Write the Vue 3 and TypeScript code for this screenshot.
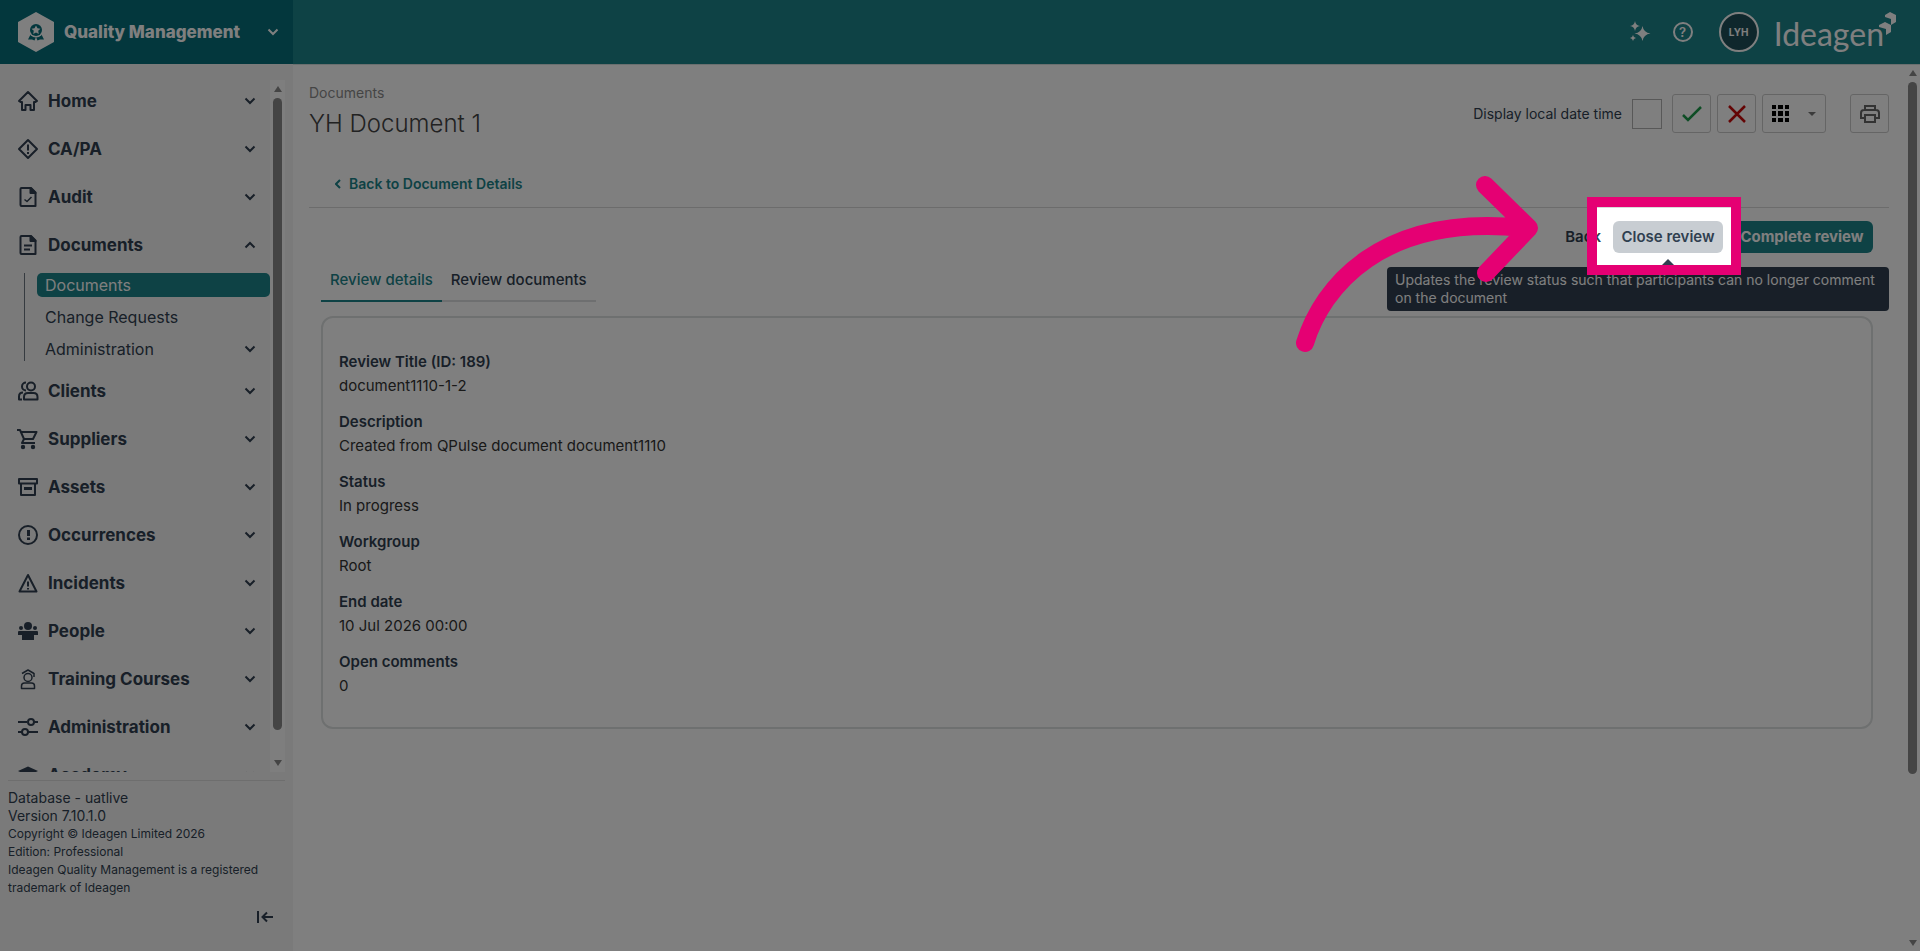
<script setup lang="ts">
import { ref } from 'vue'

interface NavChild {
  label: string
  active?: boolean
  expandable?: boolean
}

interface NavItem {
  label: string
  icon: string
  open?: boolean
  children?: NavChild[]
}

const navItems: NavItem[] = [
  { label: 'Home', icon: 'home' },
  { label: 'CA/PA', icon: 'diamond' },
  { label: 'Audit', icon: 'audit' },
  {
    label: 'Documents',
    icon: 'document',
    open: true,
    children: [
      { label: 'Documents', active: true },
      { label: 'Change Requests' },
      { label: 'Administration', expandable: true },
    ],
  },
  { label: 'Clients', icon: 'clients' },
  { label: 'Suppliers', icon: 'cart' },
  { label: 'Assets', icon: 'archive' },
  { label: 'Occurrences', icon: 'circle' },
  { label: 'Incidents', icon: 'triangle' },
  { label: 'People', icon: 'people' },
  { label: 'Training Courses', icon: 'trainee' },
  { label: 'Administration', icon: 'sliders' },
  { label: 'Academy', icon: 'cap' },
]

const details = [
  { term: 'Review Title (ID: 189)', value: 'document1110-1-2' },
  { term: 'Description', value: 'Created from QPulse document document1110' },
  { term: 'Status', value: 'In progress' },
  { term: 'Workgroup', value: 'Root' },
  { term: 'End date', value: '10 Jul 2026 00:00' },
  { term: 'Open comments', value: '0' },
]

const localTime = ref(false)
</script>

<template>
  <div class="page">
    <header class="topbar">
      <button class="brand" type="button">
        <svg class="brand-logo" viewBox="0 0 36 40" aria-hidden="true">
          <path d="M18 0 36 10v20L18 40 0 30V10z" fill="#fff" />
          <path d="M13 21.500 10 27.500h4l2.500 1 1.500-3.500 1.500 3.500 2.500-1h4l-3-6z" fill="#066e7a" />
          <circle cx="18" cy="18" r="7.500" fill="#fff" />
          <circle cx="18" cy="18" r="6" fill="#066e7a" />
          <path d="m18 13.500 1.500 2.800 3 .4-2.300 2.100.6 3.200-2.800-1.500-2.800 1.500.6-3.200-2.300-2.100 3-.4z" fill="#fff" />
        </svg>
        <span class="brand-name">Quality Management</span>
        <svg class="chevron" viewBox="0 0 12 12" aria-hidden="true"><path d="m1.500 3.500 4.500 4.500 4.500-4.500" /></svg>
      </button>
      <div class="top-actions">
        <button class="icon-button" type="button" aria-label="Assistant">
          <svg viewBox="0 0 22 22" width="22" height="22" fill="#fff" aria-hidden="true">
            <path d="M13.500 5q1 6.500 8 7.500-7 1-8 7.500-1-6.500-8-7.500 7-1 8-7.500z" />
            <path d="M6 0q.7 4.300 5 5-4.300.7-5 5-.7-4.300-5-5 4.300-.7 5-5z" />
            <path d="M4 14q.4 2.600 3 3-2.600.4-3 3-.4-2.600-3-3 2.600-.4 3-3z" />
          </svg>
        </button>
        <button class="icon-button help" type="button" aria-label="Help">?</button>
        <button class="avatar" type="button">LYH</button>
        <div class="company">
          <span>Ideagen</span>
          <svg viewBox="0 0 18 24" width="18" height="24" fill="#fff" aria-hidden="true">
            <path d="M7 3 12 0l6 3v7l-5 3V7L7 5z" />
            <path d="m1 13 6-3 6 3v7l-5 3v-6l-7-2z" />
          </svg>
        </div>
      </div>
    </header>

    <aside class="sidebar">
      <div class="nav-area">
        <nav class="nav">
          <div v-for="item in navItems" :key="item.label">
            <button class="nav-item" type="button" :aria-expanded="!!item.open">
              <svg class="nav-icon" viewBox="0 0 20 20" aria-hidden="true">
                <g v-if="item.icon === 'home'">
                  <path d="M1 10 10 1l9 9-1.500 1h-1.500v8h-3.500v-5h-5v5H4v-8H2.500z" />
                </g>
                <g v-else-if="item.icon === 'diamond'">
                  <path d="m10 1 9 9-9 9-9-9z" /><path d="M10 5.500v6M10 13v2" />
                </g>
                <g v-else-if="item.icon === 'audit'">
                  <path d="M3.500 1H13l4.500 4.500V19h-14q-1 0-1-1V2q0-1 1-1z" />
                  <path class="solid" d="M12.500 1v5h5z" /><path class="light" d="m6.500 12.500 2.500 2 4.500-4.500" />
                </g>
                <g v-else-if="item.icon === 'document'">
                  <path d="M3.500 1H13l4.500 4.500V19h-14q-1 0-1-1V2q0-1 1-1z" />
                  <path class="solid" d="M12.500 1v5h5z" /><path d="M6 10.500h8M6 14.500h6" />
                </g>
                <g v-else-if="item.icon === 'clients'">
                  <circle cx="13" cy="5.500" r="4" /><path d="M8 1.500a4 4 0 1 0 0 8M6 18v-2q0-4 4-4h5.500q4 0 4 4v2.500H6zM5 11.500q-4 0-4 4v3h3" />
                </g>
                <g v-else-if="item.icon === 'cart'">
                  <path d="M-1 1h3l4 9h9l3.500-7H3.500M6 10l-2 4h13" />
                  <circle class="solid" cx="5" cy="18" r="1.200" /><circle class="solid" cx="15" cy="18" r="1.200" />
                </g>
                <g v-else-if="item.icon === 'archive'">
                  <path d="M1 2h18v4.500H1zM3 6.500V18h14V6.500" /><path class="heavy" d="M6 11.500h8" />
                </g>
                <g v-else-if="item.icon === 'circle'">
                  <circle cx="10" cy="10" r="9" /><path class="heavy" d="M10.500 5v6M10.500 12.500v2.500" />
                </g>
                <g v-else-if="item.icon === 'triangle'">
                  <path d="m10 2 8.500 16.500h-17z" /><path d="M10 8.500v5M10 15v1.500" />
                </g>
                <g v-else-if="item.icon === 'people'" class="filled">
                  <circle cx="10" cy="5" r="4" /><circle cx="3" cy="7" r="2" /><circle cx="17" cy="7" r="2" />
                  <path d="M0 11q0-1 1-1h18q1 0 1 1v3h-4v5H4v-5H0z" />
                </g>
                <g v-else-if="item.icon === 'trainee'" class="light">
                  <circle cx="10" cy="8.500" r="4" /><path d="M4 4.500 10 1l6 3.500M16 4v4M3.500 19v-2q0-3 3-3h7q3 0 3 3v2.500h-13z" />
                </g>
                <g v-else-if="item.icon === 'sliders'">
                  <path d="M0 5h9M16 5h4M0 15h4M10 15h10" /><circle cx="13" cy="5" r="3" /><circle cx="7" cy="15" r="3" />
                </g>
                <g v-else class="filled">
                  <path d="m10 1.500 10 4.500-10 5L0 6z" /><path d="M4 10v5l6 3 6-3v-5l-6 3z" />
                </g>
              </svg>
              <span>{{ item.label }}</span>
              <svg class="chevron" :class="{ up: item.open }" viewBox="0 0 12 12" aria-hidden="true"><path d="m1.500 3.500 4.500 4.500 4.500-4.500" /></svg>
            </button>
            <div v-if="item.children" class="subnav">
              <a v-for="child in item.children" :key="child.label" href="#" :class="{ active: child.active }">
                {{ child.label }}
                <svg v-if="child.expandable" class="chevron" viewBox="0 0 12 12" aria-hidden="true"><path d="m1.500 3.500 4.500 4.500 4.500-4.500" /></svg>
              </a>
            </div>
          </div>
        </nav>
        <div class="scrollbar nav-scroll" aria-hidden="true">
          <i class="arrow-up"></i><i class="thumb"></i><i class="arrow-down"></i>
        </div>
      </div>
      <footer class="side-footer">
        <p class="large">Database - uatlive</p>
        <p class="large">Version 7.10.1.0</p>
        <p>Copyright © Ideagen Limited 2026</p>
        <p>Edition: Professional</p>
        <p>Ideagen Quality Management is a registered trademark of Ideagen</p>
        <button class="collapse" type="button" aria-label="Collapse menu">
          <svg viewBox="0 0 16 12" width="16" height="12" aria-hidden="true"><path d="M1 0v12M16 6H5.500M10 1.500 5.500 6l4.500 4.500" /></svg>
        </button>
      </footer>
    </aside>

    <div class="body">
      <main class="content">
        <div class="heading">
          <div>
            <div class="crumb">Documents</div>
            <h1>YH Document 1</h1>
          </div>
          <div class="toolbar">
            <label for="local-time">Display local date time</label>
            <input id="local-time" v-model="localTime" type="checkbox" />
            <button class="tool" type="button" aria-label="Accept">
              <svg viewBox="0 0 20 20" width="20" height="20" aria-hidden="true"><path d="m1 11 5 5L19 3" stroke="#1c9a4b" stroke-width="2.500" fill="none" /></svg>
            </button>
            <button class="tool" type="button" aria-label="Cancel">
              <svg viewBox="0 0 20 20" width="20" height="20" aria-hidden="true"><path d="m2 2 16 16M18 2 2 18" stroke="#c80a0a" stroke-width="2.500" fill="none" /></svg>
            </button>
            <button class="tool grid-tool" type="button" aria-label="View options">
              <svg viewBox="0 0 17 17" width="17" height="17" aria-hidden="true">
                <path d="M0 0h4v4H0zM6 0h5v4H6zM13 0h4v4h-4zM0 6h4v5H0zM6 6h5v5H6zM13 6h4v5h-4zM0 13h4v4H0zM6 13h5v4H6zM13 13h4v4h-4z" />
              </svg>
              <svg viewBox="0 0 8 4" width="8" height="4" aria-hidden="true"><path d="M0 0h8L4 4z" fill="#777" /></svg>
            </button>
            <button class="tool print" type="button" aria-label="Print">
              <svg viewBox="0 0 20 20" width="20" height="20" aria-hidden="true">
                <path d="M5 6V2h10v4M5 14H1V9q0-3 3-3h12q3 0 3 3v5h-4M5 11h10v7H5z" fill="none" stroke="#666" stroke-width="2" />
              </svg>
            </button>
          </div>
        </div>

        <div class="back-row">
          <a href="#">
            <svg viewBox="0 0 6 10" width="6" height="10" aria-hidden="true"><path d="M5 1 1 5l4 4" /></svg>
            Back to Document Details
          </a>
        </div>

        <div class="review">
          <div class="actions">
            <button class="btn plain" type="button">Back</button>
            <div class="highlighted">
              <button class="btn grey" type="button" aria-describedby="close-tip">Close review</button>
              <i class="tip-arrow"></i>
              <i class="spotlight"></i>
            </div>
            <button class="btn primary" type="button">Complete review</button>
            <div id="close-tip" class="tooltip" role="tooltip">
              Updates the review status such that participants can no longer comment on the document
            </div>
            <svg class="pointer" viewBox="0 0 255 185" width="255" height="185" aria-hidden="true">
              <path d="M15 173C32 118 90 43 234 58M195 15l44 43-43 45" />
            </svg>
          </div>

          <div class="tabs" role="tablist">
            <button class="selected" type="button" role="tab" aria-selected="true">Review details</button>
            <button type="button" role="tab" aria-selected="false">Review documents</button>
          </div>

          <dl class="card">
            <template v-for="row in details" :key="row.term">
              <dt>{{ row.term }}</dt>
              <dd>{{ row.value }}</dd>
            </template>
          </dl>
        </div>
      </main>
      <div class="scrollbar page-scroll" aria-hidden="true">
        <i class="arrow-up"></i><i class="thumb"></i><i class="arrow-down"></i>
      </div>
    </div>
  </div>
</template>

<style>
body {
  margin: 0;
}
</style>

<style scoped>
* {
  box-sizing: border-box;
}
.page {
  display: grid;
  grid-template: 64px minmax(0, 1fr) / 293px minmax(0, 1fr);
  height: 100vh;
  overflow: hidden;
  background: #fff;
  color: #303f50;
  font: 15px/20px Inter, "Liberation Sans", sans-serif;
}
button {
  padding: 0;
  border: 0;
  background: none;
  color: inherit;
  font: inherit;
  cursor: pointer;
}
a {
  color: inherit;
  text-decoration: none;
}
p, h1, dl, dd {
  margin: 0;
}
svg {
  display: block;
  flex: none;
}
.chevron {
  width: 12px;
  height: 12px;
  fill: none;
  stroke: currentColor;
  stroke-width: 2;
}
.chevron.up {
  transform: rotate(180deg);
}

/* Top bar */
.topbar {
  grid-column: 1 / 3;
  display: flex;
  justify-content: space-between;
  background: #1c848a;
}
.brand {
  display: flex;
  align-items: center;
  width: 293px;
  padding: 0 14px 0 18px;
  background: #066e7a;
  color: #fff;
}
.brand-logo {
  width: 36px;
  height: 40px;
}
.brand-name {
  flex: 1;
  padding-left: 10px;
  text-align: left;
  font-size: 17px;
  font-weight: 800;
}
.top-actions {
  display: flex;
  align-items: center;
  padding-right: 24px;
  color: #fff;
}
.icon-button {
  width: 22px;
  height: 22px;
}
.help {
  width: 20px;
  height: 20px;
  margin: 0 26px 0 22px;
  border: 2px solid #fff;
  border-radius: 50%;
  font-size: 13px;
  font-weight: 600;
  line-height: 16px;
}
.avatar {
  width: 40px;
  height: 40px;
  border: 2px solid #fff;
  border-radius: 50%;
  background: #1e4f58;
  font-size: 10px;
  font-weight: 700;
}
.company {
  display: flex;
  align-items: flex-start;
  height: 40px;
  margin-left: 15px;
  font: 32px/44px Lato, sans-serif;
}
.company svg {
  margin-left: -6px;
}

/* Side menu */
.sidebar {
  display: flex;
  flex-direction: column;
  min-height: 0;
  padding: 16px 8px 0;
  background: #f5f5f5;
}
.nav-area {
  display: flex;
  flex: 1;
  min-height: 0;
  margin-bottom: 8px;
}
.nav {
  flex: 1;
  overflow: hidden;
  margin-top: -3px;
}
.nav-item {
  display: flex;
  align-items: center;
  width: 100%;
  height: 48px;
  padding: 0 14px 0 10px;
  font-size: 17px;
  font-weight: 700;
}
.nav-item span {
  flex: 1;
  padding-left: 10px;
  text-align: left;
}
.nav-icon {
  width: 20px;
  height: 20px;
  overflow: visible;
  fill: none;
  stroke: currentColor;
  stroke-width: 2;
  stroke-linejoin: round;
}
.nav-icon .solid,
.nav-icon .filled {
  fill: currentColor;
}
.nav-icon .filled {
  stroke: none;
}
.nav-icon .heavy {
  stroke-width: 3;
}
.nav-icon .light {
  stroke-width: 1.5;
}
.subnav {
  display: flex;
  flex-direction: column;
  gap: 8px;
  margin: 4px 0 6px 16px;
  padding: 0 0 0 12px;
  border-left: 1px solid #6c7680;
  font-size: 16px;
}
.subnav a {
  display: flex;
  align-items: center;
  justify-content: space-between;
  height: 24px;
  padding: 0 14px 0 8px;
  border-radius: 5px;
}
.subnav .active {
  background: #1c848a;
  color: #fff;
}
.scrollbar {
  display: flex;
  flex: none;
  flex-direction: column;
  align-items: center;
  width: 15px;
  padding: 6px 0;
}
.nav-scroll {
  background: #fdfdfd;
}
.arrow-up,
.arrow-down {
  border: 4px solid transparent;
}
.arrow-up {
  border-top: 0;
  border-bottom: 6px solid #8a8a8a;
}
.arrow-down {
  margin-top: auto;
  border-bottom: 0;
  border-top: 6px solid #8a8a8a;
}
.thumb {
  width: 9px;
  height: 93%;
  margin-top: 6px;
  border-radius: 5px;
  background: #8a8a8a;
}
.side-footer {
  padding-top: 8px;
  border-top: 1px solid #dcdcdc;
  font-size: 12px;
  line-height: 18px;
}
.side-footer .large {
  font-size: 14px;
}
.collapse {
  display: block;
  margin: 14px 12px 28px auto;
}
.collapse svg {
  fill: none;
  stroke: currentColor;
  stroke-width: 2;
}

/* Page content */
.body {
  display: flex;
  min-height: 0;
  border-top: 1px solid #d5dede;
}
.content {
  flex: 1;
  min-width: 0;
  padding: 18px 16px 0;
}
.heading {
  display: flex;
  justify-content: space-between;
}
.crumb {
  color: #8b8b8b;
  font-size: 14px;
}
h1 {
  margin-top: 5px;
  color: #444;
  font-size: 24px;
  font-weight: 300;
  line-height: 32px;
}
.toolbar {
  display: flex;
  align-items: center;
  height: 39px;
  margin-top: 11px;
  gap: 6px;
}
.toolbar label {
  margin-right: 4px;
  font-size: 14px;
}
.toolbar input {
  width: 30px;
  height: 30px;
  margin: 0 4px 0 0;
  border: 1px solid #b0b0b0;
  appearance: none;
  background: #fff;
}
.tool {
  display: flex;
  align-items: center;
  justify-content: center;
  width: 39px;
  height: 39px;
  border: 1px solid #cacaca;
  border-radius: 3px;
}
.grid-tool {
  width: 64px;
  gap: 19px;
}
.print {
  margin-left: 18px;
}
.back-row {
  padding: 34px 26px 13px;
  border-bottom: 1px solid #d9d9d9;
}
.back-row a {
  display: inline-flex;
  align-items: center;
  gap: 8px;
  color: #1c848a;
  font-size: 14px;
  font-weight: 600;
}
.back-row path {
  fill: none;
  stroke: currentColor;
  stroke-width: 2;
}
.review {
  padding: 13px 16px 0 12px;
}
.actions {
  position: relative;
  display: flex;
  justify-content: flex-end;
  gap: 8px;
}
.btn {
  height: 32px;
  padding: 0 8px;
  border-radius: 6px;
  font-weight: 600;
}
.plain {
  padding: 0 4px;
}
.grey {
  min-width: 110px;
  background: #c8cdd2;
}
.primary {
  min-width: 142px;
  background: #1c848a;
  color: #fff;
  font-weight: 700;
}
.highlighted {
  position: relative;
}
.tip-arrow {
  position: absolute;
  z-index: 2;
  top: 38px;
  left: 50%;
  margin-left: -8px;
  border: 8px solid transparent;
  border-top: 0;
  border-bottom-color: #303f50;
}
.tooltip {
  position: absolute;
  z-index: 2;
  top: 46px;
  right: -16px;
  width: 502px;
  padding: 4px 8px;
  border-radius: 4px;
  background: #303f50;
  color: #fff;
  font-size: 14px;
  line-height: 18px;
}
/* Dims everything outside of the framed button */
.spotlight {
  position: absolute;
  z-index: 5;
  inset: -24px -18px -22px -26px;
  border: 10px solid #e50073;
  box-shadow: 0 0 0 4000px rgba(0, 0, 0, 0.5);
  pointer-events: none;
}
.pointer {
  position: absolute;
  z-index: 6;
  top: -51px;
  right: 328px;
  fill: none;
  stroke: #e50073;
  stroke-width: 18;
  stroke-linecap: round;
  stroke-linejoin: round;
  pointer-events: none;
}
.tabs {
  display: flex;
  margin-top: 15px;
}
.tabs button {
  height: 34px;
  padding: 0 9px 8px;
  border-bottom: 2px solid #dcdfe0;
  font-weight: 500;
}
.tabs .selected {
  border-color: #1c848a;
  color: #1c848a;
}
.card {
  margin-top: 14px;
  padding: 32px 16px 29px;
  border: 2px solid #dde0e0;
  border-radius: 12px;
  line-height: 24px;
}
dt {
  font-weight: 600;
}
dd {
  color: #333;
}
dd + dt {
  margin-top: 12px;
}
.page-scroll {
  padding: 5px 0;
}
.page-scroll .thumb {
  height: 79%;
}
</style>
